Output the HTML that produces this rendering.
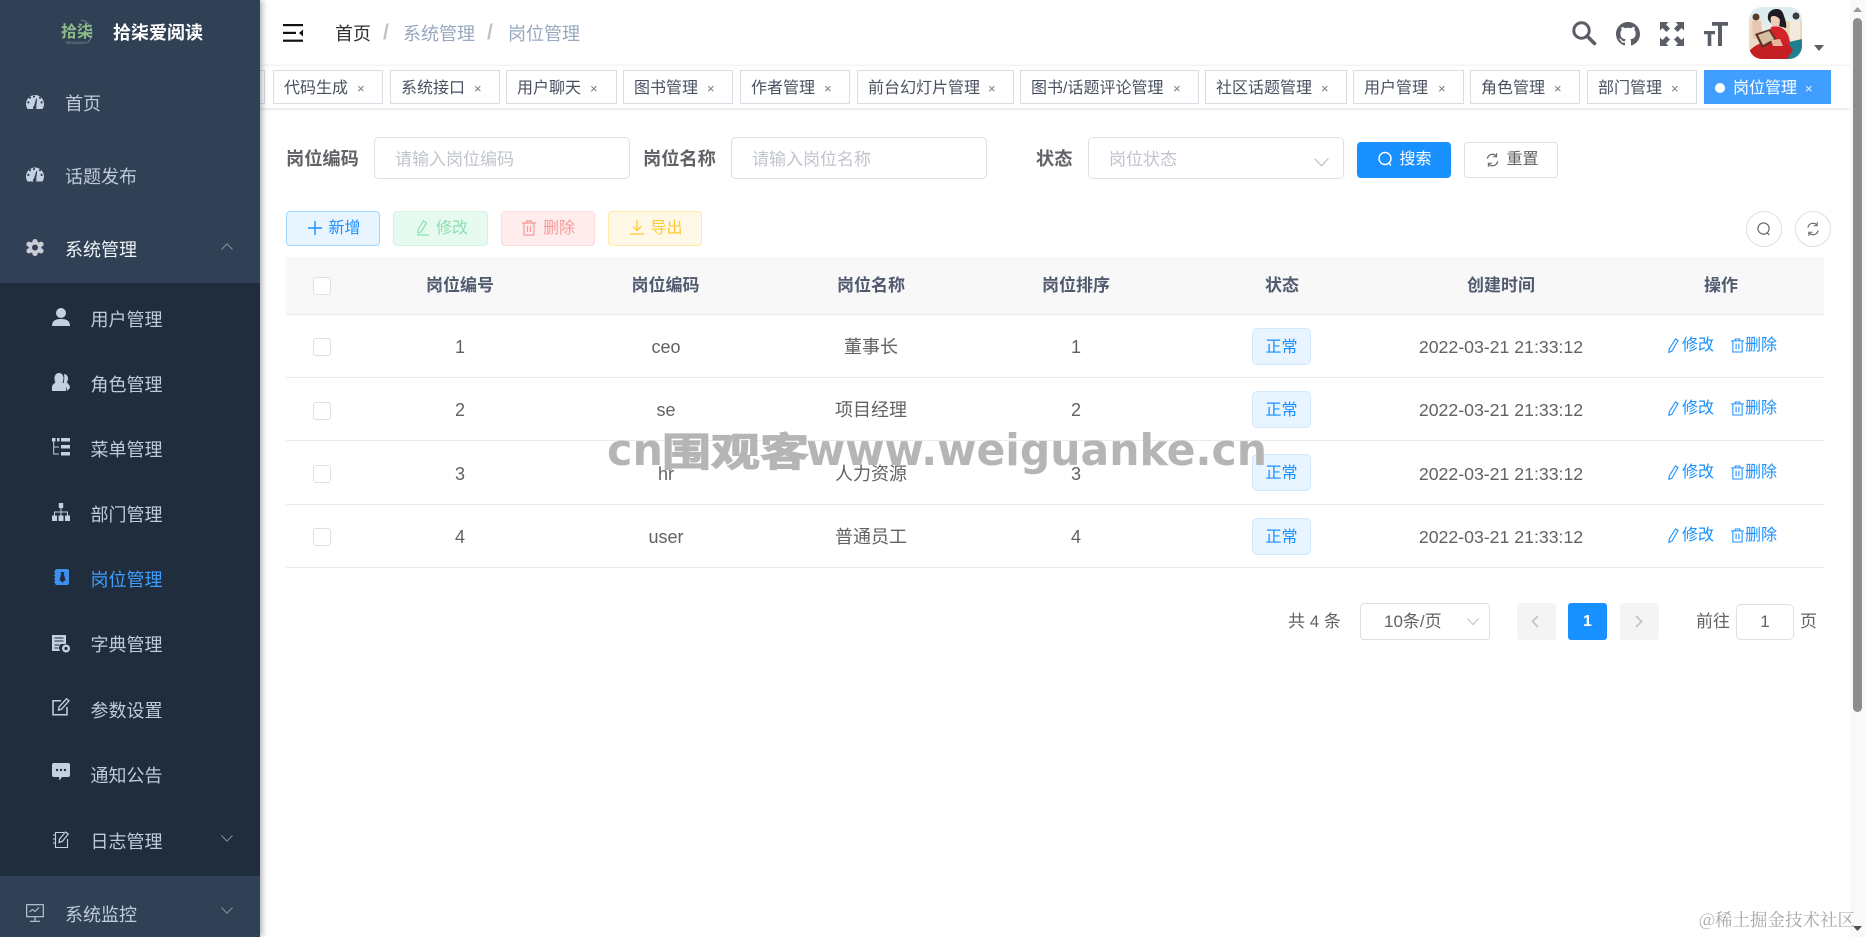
<!DOCTYPE html>
<html lang="zh-CN">
<head>
<meta charset="utf-8">
<title>岗位管理</title>
<style>
*{box-sizing:border-box}
html,body{margin:0;padding:0;width:1865px;height:937px;overflow:hidden;background:#fff}
body{font-family:"Liberation Sans","Noto Sans CJK SC",sans-serif;color:#606266;position:relative}
.a{position:absolute}
.t{position:absolute;white-space:nowrap;line-height:24px;height:24px}
.c{position:absolute;white-space:nowrap;line-height:24px;height:24px;text-align:center;transform:translateX(-50%)}
svg{position:absolute;display:block;overflow:visible}
#side{position:absolute;left:0;top:0;width:260px;height:937px;background:#304156;box-shadow:2px 0 6px rgba(0,21,41,.35);z-index:3}
#sub{position:absolute;left:0;top:283px;width:260px;height:593px;background:#1f2d3d}
.m{font-size:18px;color:#bfcbd9;margin-top:1px}
.tag{position:absolute;top:70px;height:34px;border:1px solid #d8dce5;background:#fff;font-size:16px;line-height:36px;color:#495060;padding-left:10px;white-space:nowrap}
.tag i{position:absolute;top:0;font-style:normal;font-size:13px;color:#77797f}
.inp{position:absolute;top:137px;height:42px;border:1px solid #dcdfe6;border-radius:5px;background:#fff;font-size:17px;line-height:44px;color:#c0c4cc;padding-left:20px}
.lab{font-size:18.2px;font-weight:bold;color:#606266;top:147px}
.btn{position:absolute;top:211px;height:35px;border-radius:4px;border:1px solid}
.bt{position:absolute;top:217px;font-size:16px;line-height:24px;height:24px;white-space:nowrap}
.hd{font-size:17px;font-weight:bold;color:#515a6e;top:274px}
.line{position:absolute;left:286px;width:1538px;height:1px;background:#e6ebf5}
.cb{position:absolute;left:313px;width:18px;height:18px;border:1px solid #dcdfe6;border-radius:3px;background:#fff}
.td{font-size:18px;color:#606266;margin-top:1px}
.dt{font-size:17.7px}
.st{position:absolute;left:1252px;width:59px;height:37px;background:#e8f4ff;border:1px solid #d1e9ff;border-radius:5px;color:#1890ff;font-size:16px;line-height:37px;text-align:center}
.op{font-size:16px;color:#1890ff;margin-top:1px}
.pg{position:absolute;top:603px;width:39px;height:37px;border-radius:3px;background:#f4f4f5}
.circ{position:absolute;top:211px;width:36px;height:36px;border:1px solid #dcdfe6;border-radius:50%;background:#fff}
.bc{font-size:18px;color:#97a8be;top:22px}
.sl{font-size:21px;color:#c0c4cc;font-weight:bold;top:21px}
</style>
</head>
<body>

<!-- main top header -->
<svg style="left:283px;top:24px" width="21" height="18" viewBox="0 0 21 18"><rect x="0" y="0" width="20" height="2.2" fill="#111"/><rect x="0" y="7.8" width="13" height="2.2" fill="#111"/><rect x="0" y="15.6" width="20" height="2.2" fill="#111"/><path d="M20 5.5v7l-4-3.5z" fill="#111"/></svg>
<div class="t bc" style="left:335px;color:#303133">首页</div>
<div class="t sl" style="left:383px">/</div>
<div class="t bc" style="left:403px">系统管理</div>
<div class="t sl" style="left:487px">/</div>
<div class="t bc" style="left:508px">岗位管理</div>

<svg style="left:1572px;top:21px" width="24" height="24" viewBox="0 0 24 24"><circle cx="9.5" cy="9.5" r="7.7" fill="none" stroke="#5a5e66" stroke-width="3"/><path d="M15 15l7.5 7.5" stroke="#5a5e66" stroke-width="3.6" stroke-linecap="round"/></svg>
<svg style="left:1616px;top:22px" width="24" height="24" viewBox="0 0 16 16"><path fill="#5a5e66" d="M8 0C3.58 0 0 3.58 0 8c0 3.54 2.29 6.53 5.47 7.59.4.07.55-.17.55-.38 0-.19-.01-.82-.01-1.49-2.01.37-2.53-.49-2.69-.94-.09-.23-.48-.94-.82-1.13-.28-.15-.68-.52-.01-.53.63-.01 1.08.58 1.23.82.72 1.21 1.87.87 2.33.66.07-.52.28-.87.51-1.07-1.78-.2-3.64-.89-3.64-3.95 0-.87.31-1.59.82-2.15-.08-.2-.36-1.02.08-2.12 0 0 .67-.21 2.2.82.64-.18 1.32-.27 2-.27s1.36.09 2 .27c1.53-1.04 2.2-.82 2.2-.82.44 1.1.16 1.92.08 2.12.51.56.82 1.27.82 2.15 0 3.07-1.87 3.75-3.65 3.95.29.25.54.73.54 1.48 0 1.07-.01 1.93-.01 2.2 0 .21.15.46.55.38A8.013 8.013 0 0016 8c0-4.42-3.58-8-8-8z"/></svg>
<svg style="left:1660px;top:22px" width="24" height="24" viewBox="0 0 24 24" fill="#5a5e66"><path d="M0 0h8.5L6 2.5l4 4-3.500 3.500-4-4L0 8.500zM24 0v8.500L21.500 6l-4 4L14 6.500l4-4L15.500 0zM0 24v-8.500L2.500 18l4-4L10 17.500l-4 4L8.500 24zM24 24h-8.500l2.500-2.500-4-4 3.500-3.500 4 4 2.500-2.500z"/></svg>
<svg style="left:1704px;top:22px" width="24" height="24" viewBox="0 0 24 24" fill="#5a5e66"><path d="M8 0h16v3.800h-6V24h-4V3.800H8zM0 9h11v3.300H7.300V24H3.700V12.300H0z"/></svg>

<svg style="left:1749px;top:7px" width="53" height="52" viewBox="0 0 53 52">
<defs><clipPath id="av"><rect width="53" height="52" rx="13"/></clipPath></defs>
<g clip-path="url(#av)">
<rect width="53" height="52" fill="#e9efe6"/>
<rect x="0" y="0" width="53" height="18" fill="#dcecef"/>
<rect x="35" y="14" width="18" height="26" fill="#e8d9b8"/>
<path d="M0 12h12v30H0z" fill="#efdcc8"/>
<circle cx="7" cy="10" r="3.500" fill="#5a3b2c"/>
<path d="M3 14h9l2 18H4z" fill="#e7c6b0"/>
<circle cx="47" cy="9" r="3.500" fill="#3c3a3a"/>
<path d="M41 14h10v22H41z" fill="#f3e9dc"/>
<path d="M36 36l17-4v20H30z" fill="#1f7f8c"/>
<path d="M28 2c-7 0-10 5-9 10 1 3 4 5 6 6l12 3c1-4-1-9-2-12-1-4-3-7-7-7z" fill="#1d1a22"/>
<path d="M22 10c2-2 7-1 9 3l-1 8-6-1c-2-3-3-7-2-10z" fill="#f0cdb8"/>
<path d="M22 20c7-2 14 1 17 8 2 5 3 10 1 15l-13 2-8-12z" fill="#d2232a"/>
<path d="M0 44c8-8 18-11 30-9 5 1 12 3 14 8l-6 9H0z" fill="#c51f26"/>
<path d="M6 27l15-5 7 11-15 8z" fill="#5b3428"/>
<path d="M9 28l11-4 5 8-11 6z" fill="#d9bda0"/>
<path d="M22 33l9-1 3 7-10 0z" fill="#e9b79e"/>
</g></svg>
<svg style="left:1814px;top:45px" width="10" height="6" viewBox="0 0 10 6"><path d="M0 0h10L5 6z" fill="#5a5e66"/></svg>

<!-- tags bar -->
<div class="a" style="left:260px;top:65px;width:1590px;height:43px;background:#fff;border-top:1px solid #f3f3f3;box-shadow:0 1px 3px rgba(0,0,0,.14)"></div>
<div class="tag" style="left:250px;width:15px"></div>
<div class="tag" style="left:273px;width:110px">代码生成<i style="left:83px">×</i></div>
<div class="tag" style="left:390px;width:110px">系统接口<i style="left:83px">×</i></div>
<div class="tag" style="left:506px;width:111px">用户聊天<i style="left:83px">×</i></div>
<div class="tag" style="left:623px;width:110px">图书管理<i style="left:83px">×</i></div>
<div class="tag" style="left:740px;width:110px">作者管理<i style="left:83px">×</i></div>
<div class="tag" style="left:857px;width:157px">前台幻灯片管理<i style="left:130px">×</i></div>
<div class="tag" style="left:1020px;width:179px">图书/话题评论管理<i style="left:152px">×</i></div>
<div class="tag" style="left:1205px;width:142px">社区话题管理<i style="left:115px">×</i></div>
<div class="tag" style="left:1353px;width:111px">用户管理<i style="left:84px">×</i></div>
<div class="tag" style="left:1470px;width:110px">角色管理<i style="left:83px">×</i></div>
<div class="tag" style="left:1587px;width:110px">部门管理<i style="left:83px">×</i></div>
<div class="tag" style="left:1704px;width:127px;background:#409eff;border-color:#409eff;color:#fff;padding-left:28px">岗位管理<i style="left:100px;color:#e8f2ff">×</i><span class="a" style="left:10px;top:12px;width:10px;height:10px;border-radius:50%;background:#fff"></span></div>

<!-- search form -->
<div class="t lab" style="left:286px">岗位编码</div>
<div class="inp" style="left:374px;width:256px">请输入岗位编码</div>
<div class="t lab" style="left:643px">岗位名称</div>
<div class="inp" style="left:731px;width:256px">请输入岗位名称</div>
<div class="t lab" style="left:1036px">状态</div>
<div class="inp" style="left:1088px;width:256px">岗位状态</div>
<svg style="left:1314px;top:158px" width="15" height="9" viewBox="0 0 15 9"><path d="M.7.7l6.800 7 6.800-7" fill="none" stroke="#c0c4cc" stroke-width="1.300"/></svg>

<div class="a" style="left:1357px;top:142px;width:94px;height:36px;border-radius:4px;background:#1890ff"></div>
<svg style="left:1378px;top:151px" width="15" height="16" viewBox="0 0 15 16"><circle cx="7" cy="7.500" r="6" fill="none" stroke="#fff" stroke-width="1.400"/><path d="M11 12l2 2.500" stroke="#fff" stroke-width="1.400"/></svg>
<div class="t" style="left:1399.5px;top:148px;font-size:16px;color:#fff">搜索</div>
<div class="a" style="left:1464px;top:142px;width:94px;height:36px;border-radius:4px;background:#fff;border:1px solid #dcdfe6"></div>
<svg style="left:1486px;top:153px" width="13" height="14" viewBox="0 0 14 15"><path d="M1.500 6A5.600 5.600 0 0 1 11 3M12.500 9A5.600 5.600 0 0 1 3 12" fill="none" stroke="#606266" stroke-width="1.300"/><path d="M11.500 0v4h-4M2.500 15v-4h4" fill="none" stroke="#606266" stroke-width="1"/></svg>
<div class="t" style="left:1506.5px;top:148px;font-size:16px;color:#606266">重置</div>

<!-- tool buttons -->
<div class="btn" style="left:286px;width:94px;background:#e8f4ff;border-color:#a3d3ff"></div>
<svg style="left:308px;top:221px" width="14" height="14" viewBox="0 0 14 14"><path d="M7 0v14M0 7h14" stroke="#1890ff" stroke-width="1.400"/></svg>
<div class="bt" style="left:328.5px;color:#1890ff">新增</div>
<div class="btn" style="left:393px;width:95px;background:#e7faf0;border-color:#d0f5e0"></div>
<svg style="left:416px;top:220px" width="14" height="16" viewBox="0 0 14 16"><path d="M7.500 1l3 2-5.500 9-3 1 0-3.500zM1 15h12" fill="none" stroke="#89e0ae" stroke-width="1.200"/></svg>
<div class="bt" style="left:436px;color:#89e0ae">修改</div>
<div class="btn" style="left:501px;width:94px;background:#ffeded;border-color:#ffdbdb"></div>
<svg style="left:522px;top:220px" width="14" height="16" viewBox="0 0 14 16"><path d="M0 3h14M4.500 3V1h5v2M2 3v12h10V3M5.500 6v6M8.500 6v6" fill="none" stroke="#f79a9a" stroke-width="1.200"/></svg>
<div class="bt" style="left:543px;color:#f79a9a">删除</div>
<div class="btn" style="left:608px;width:94px;background:#fff8e6;border-color:#ffe8a8"></div>
<svg style="left:630px;top:220px" width="14" height="15" viewBox="0 0 14 15"><path d="M7 0v10M3 6.500l4 4 4-4M0 14h14" fill="none" stroke="#ffc933" stroke-width="1.300"/></svg>
<div class="bt" style="left:650.5px;color:#ffc933">导出</div>

<div class="circ" style="left:1746px"></div>
<svg style="left:1757px;top:221px" width="14" height="16" viewBox="0 0 15 16"><circle cx="7" cy="7.500" r="6" fill="none" stroke="#606266" stroke-width="1.200"/><path d="M11 12l2 2.500" stroke="#606266" stroke-width="1.200"/></svg>
<div class="circ" style="left:1795px"></div>
<svg style="left:1806px;top:222px" width="14" height="14" viewBox="0 0 14 15"><path d="M1.500 6A5.600 5.600 0 0 1 11 3M12.500 9A5.600 5.600 0 0 1 3 12" fill="none" stroke="#606266" stroke-width="1.200"/><path d="M11.500 0v4h-4M2.500 15v-4h4" fill="none" stroke="#606266" stroke-width="1"/></svg>

<!-- table -->
<div class="a" style="left:286px;top:257px;width:1538px;height:57px;background:#f8f8f9"></div>
<div class="line" style="top:314px"></div>
<div class="line" style="top:377px"></div>
<div class="line" style="top:440px"></div>
<div class="line" style="top:504px"></div>
<div class="line" style="top:567px"></div>
<div class="cb" style="top:277px"></div>
<div class="cb" style="top:338px"></div>
<div class="cb" style="top:402px"></div>
<div class="cb" style="top:465px"></div>
<div class="cb" style="top:528px"></div>

<div class="c hd" style="left:460px">岗位编号</div>
<div class="c hd" style="left:665.500px">岗位编码</div>
<div class="c hd" style="left:871px">岗位名称</div>
<div class="c hd" style="left:1076px">岗位排序</div>
<div class="c hd" style="left:1282px">状态</div>
<div class="c hd" style="left:1501px">创建时间</div>
<div class="c hd" style="left:1721px">操作</div>

<div class="c td" style="left:460px;top:334px">1</div>
<div class="c td" style="left:666px;top:334px">ceo</div>
<div class="c td" style="left:871px;top:334px">董事长</div>
<div class="c td" style="left:1076px;top:334px">1</div>
<div class="st" style="top:328px">正常</div>
<div class="c td dt" style="left:1501px;top:334px">2022-03-21 21:33:12</div>

<div class="c td" style="left:460px;top:397px">2</div>
<div class="c td" style="left:666px;top:397px">se</div>
<div class="c td" style="left:871px;top:397px">项目经理</div>
<div class="c td" style="left:1076px;top:397px">2</div>
<div class="st" style="top:391px">正常</div>
<div class="c td dt" style="left:1501px;top:397px">2022-03-21 21:33:12</div>

<div class="c td" style="left:460px;top:461px">3</div>
<div class="c td" style="left:666px;top:461px">hr</div>
<div class="c td" style="left:871px;top:461px">人力资源</div>
<div class="c td" style="left:1076px;top:461px">3</div>
<div class="st" style="top:454px">正常</div>
<div class="c td dt" style="left:1501px;top:461px">2022-03-21 21:33:12</div>

<div class="c td" style="left:460px;top:524px">4</div>
<div class="c td" style="left:666px;top:524px">user</div>
<div class="c td" style="left:871px;top:524px">普通员工</div>
<div class="c td" style="left:1076px;top:524px">4</div>
<div class="st" style="top:518px">正常</div>
<div class="c td dt" style="left:1501px;top:524px">2022-03-21 21:33:12</div>

<!-- operation links -->
<svg style="left:1667px;top:338px" width="14" height="15" viewBox="0 0 14 15"><path d="M8.500 1l2.500 1.500L5 13l-3 1.500.2-3.500z" fill="none" stroke="#1890ff" stroke-width="1.100"/></svg>
<div class="t op" style="left:1682px;top:333px">修改</div>
<svg style="left:1731px;top:338px" width="13" height="15" viewBox="0 0 14 16"><path d="M0 3h14M4.500 3V1h5v2M2 3v12h10V3M5.500 6v6M8.500 6v6" fill="none" stroke="#1890ff" stroke-width="1.100"/></svg>
<div class="t op" style="left:1745px;top:333px">删除</div>

<svg style="left:1667px;top:401px" width="14" height="15" viewBox="0 0 14 15"><path d="M8.500 1l2.500 1.500L5 13l-3 1.500.2-3.500z" fill="none" stroke="#1890ff" stroke-width="1.100"/></svg>
<div class="t op" style="left:1682px;top:396px">修改</div>
<svg style="left:1731px;top:401px" width="13" height="15" viewBox="0 0 14 16"><path d="M0 3h14M4.500 3V1h5v2M2 3v12h10V3M5.500 6v6M8.500 6v6" fill="none" stroke="#1890ff" stroke-width="1.100"/></svg>
<div class="t op" style="left:1745px;top:396px">删除</div>

<svg style="left:1667px;top:465px" width="14" height="15" viewBox="0 0 14 15"><path d="M8.500 1l2.500 1.500L5 13l-3 1.500.2-3.500z" fill="none" stroke="#1890ff" stroke-width="1.100"/></svg>
<div class="t op" style="left:1682px;top:460px">修改</div>
<svg style="left:1731px;top:465px" width="13" height="15" viewBox="0 0 14 16"><path d="M0 3h14M4.500 3V1h5v2M2 3v12h10V3M5.500 6v6M8.500 6v6" fill="none" stroke="#1890ff" stroke-width="1.100"/></svg>
<div class="t op" style="left:1745px;top:460px">删除</div>

<svg style="left:1667px;top:528px" width="14" height="15" viewBox="0 0 14 15"><path d="M8.500 1l2.500 1.500L5 13l-3 1.500.2-3.500z" fill="none" stroke="#1890ff" stroke-width="1.100"/></svg>
<div class="t op" style="left:1682px;top:523px">修改</div>
<svg style="left:1731px;top:528px" width="13" height="15" viewBox="0 0 14 16"><path d="M0 3h14M4.500 3V1h5v2M2 3v12h10V3M5.500 6v6M8.500 6v6" fill="none" stroke="#1890ff" stroke-width="1.100"/></svg>
<div class="t op" style="left:1745px;top:523px">删除</div>

<!-- pagination -->
<div class="t" style="left:1288px;top:610px;font-size:17px;color:#606266">共 4 条</div>
<div class="a" style="left:1360px;top:603px;width:130px;height:37px;border:1px solid #dcdfe6;border-radius:4px"></div>
<div class="t" style="left:1384px;top:610px;font-size:17px;color:#606266">10条/页</div>
<svg style="left:1467px;top:618px" width="12" height="7" viewBox="0 0 12 7"><path d="M.5.500L6 6.500 11.500.500" fill="none" stroke="#c0c4cc" stroke-width="1.100"/></svg>
<div class="pg" style="left:1517px"></div>
<svg style="left:1531px;top:615px" width="8" height="13" viewBox="0 0 8 13"><path d="M7 1L1.500 6.500 7 12" fill="none" stroke="#c0c4cc" stroke-width="1.700"/></svg>
<div class="pg" style="left:1568px;background:#1890ff;color:#fff;text-align:center;font-size:16px;font-weight:bold;line-height:37px">1</div>
<div class="pg" style="left:1620px"></div>
<svg style="left:1635px;top:615px" width="8" height="13" viewBox="0 0 8 13"><path d="M1 1l5.500 5.500L1 12" fill="none" stroke="#c0c4cc" stroke-width="1.700"/></svg>
<div class="t" style="left:1696px;top:610px;font-size:17px;color:#606266">前往</div>
<div class="a" style="left:1736px;top:604px;width:58px;height:36px;border:1px solid #dcdfe6;border-radius:5px;text-align:center;line-height:34px;font-size:17px;color:#606266">1</div>
<div class="t" style="left:1800px;top:610px;font-size:17px;color:#606266">页</div>

<!-- scrollbar -->
<div class="a" style="left:1850px;top:0;width:15px;height:937px;background:#f9f9f9"></div>
<div class="a" style="left:1853px;top:18px;width:9px;height:694px;background:#8d8d8d;border-radius:5px"></div>
<svg style="left:1853px;top:7px" width="9" height="5" viewBox="0 0 9 5"><path d="M0 5h9L4.500 0z" fill="#9a9a9a"/></svg>
<svg style="left:1853px;top:926px" width="9" height="5" viewBox="0 0 9 5"><path d="M0 0h9L4.500 5z" fill="#505050"/></svg>

<!-- sidebar -->
<div id="side">
  <div id="sub"></div>
  <svg style="left:61px;top:19px" width="33" height="27" viewBox="0 0 33 27">
    <path d="M20 1a13 13 0 0 1 6 23" fill="none" stroke="#8b9aa8" stroke-width=".7"/>
    <text x="0" y="18" font-size="16" font-family="'Noto Sans CJK SC',sans-serif" font-weight="bold" fill="#8fbc8a" textLength="32" lengthAdjust="spacingAndGlyphs">拾柒</text>
    <text x="5" y="25" font-size="4" font-family="'Liberation Sans',sans-serif" fill="#8b9aa8" textLength="20" lengthAdjust="spacingAndGlyphs">READING</text>
  </svg>
  <div class="t" style="left:113px;top:21px;font-size:18px;font-weight:bold;color:#fff">拾柒爱阅读</div>

  <svg style="left:26px;top:95px" width="18" height="14" viewBox="0 0 18 14"><path fill="#c5d0e0" d="M9 0C4 0 0 4 0 9c0 2 .6 3.600 1.600 5h14.800c1-1.400 1.600-3 1.600-5 0-5-4-9-9-9z"/><path fill="#304156" d="M10.200 3.500L8 11a1.800 1.800 0 1 0 2.200.6l1-7.800zM4 3.800a1.100 1.100 0 1 1 .01 0zM2.400 8.500a1.100 1.100 0 1 1 .01 0zM15.600 8.500a1.100 1.100 0 1 1 .01 0zM8 2.700a1.100 1.100 0 1 1 .01 0zM14 3.800a1.100 1.100 0 1 1 .01 0z"/></svg>
  <div class="t m" style="left:65px;top:91px">首页</div>

  <svg style="left:26px;top:167px" width="18" height="15" viewBox="0 0 18 14"><path fill="#c5d0e0" d="M9 0C4 0 0 4 0 9c0 2 .6 3.600 1.600 5h14.800c1-1.400 1.600-3 1.600-5 0-5-4-9-9-9z"/><path fill="#304156" d="M10.200 3.500L8 11a1.800 1.800 0 1 0 2.200.6l1-7.800zM4 3.800a1.100 1.100 0 1 1 .01 0zM2.400 8.500a1.100 1.100 0 1 1 .01 0zM15.600 8.500a1.100 1.100 0 1 1 .01 0zM8 2.700a1.100 1.100 0 1 1 .01 0zM14 3.800a1.100 1.100 0 1 1 .01 0z"/></svg>
  <div class="t m" style="left:65px;top:164px">话题发布</div>

  <svg style="left:26px;top:239px" width="18" height="17" viewBox="0 0 18 17"><g fill="#c9ced6"><circle cx="9" cy="8.500" r="6.300"/><circle cx="9" cy="2.600" r="2.600"/><circle cx="9" cy="14.400" r="2.600"/><circle cx="3" cy="5.200" r="2.600"/><circle cx="15" cy="5.200" r="2.600"/><circle cx="3" cy="11.800" r="2.600"/><circle cx="15" cy="11.800" r="2.600"/></g><circle cx="9" cy="8.500" r="3" fill="#304156"/></svg>
  <div class="t m" style="left:65px;top:237px;color:#eef1f5">系统管理</div>
  <svg style="left:221px;top:243px" width="12" height="7" viewBox="0 0 12 7"><path d="M.5 6.500L6 .8l5.500 5.700" fill="none" stroke="#8493a6" stroke-width="1"/></svg>

  <svg style="left:52px;top:308px" width="18" height="18" viewBox="0 0 18 18"><g fill="#c5d0e0"><ellipse cx="9" cy="5" rx="5" ry="5"/><path d="M0 18c0-5 3-7 9-7s9 2 9 7z"/></g></svg>
  <div class="t m" style="left:90.500px;top:307px">用户管理</div>

  <svg style="left:52px;top:373px" width="18" height="18" viewBox="0 0 18 18"><g fill="#c5d0e0"><path d="M0 18V14c0-2 2-3.500 3.500-4.500C2.500 8 2.500 6 2.500 5c0-3 2-5 4.500-5s4.500 2 4.500 5c0 1-.2 3-1 4.500 2 1 3.500 2.500 3.500 4.500v4z"/><path d="M12 1c2.500 0 4 2 4 4.500 0 1.500-.6 3-1.300 4 1.500 1 3.300 3 3.300 5.500l-3 3c0-3-1.500-6-3.500-8 .8-2 1-6.500.5-9z"/></g></svg>
  <div class="t m" style="left:90.500px;top:372px">角色管理</div>

  <svg style="left:52px;top:438px" width="18" height="18" viewBox="0 0 18 18"><g fill="#c5d0e0"><rect x="0" y="0" width="3.500" height="3.500"/><rect x="9" y="0" width="9" height="3.500"/><rect x="9" y="7" width="9" height="3.500"/><rect x="9" y="14" width="9" height="3.500"/><rect x="5" y="0" width="2.500" height="3.500"/></g><path d="M1.700 3v13H7M1.700 9H7" fill="none" stroke="#c5d0e0" stroke-width="1"/></svg>
  <div class="t m" style="left:90.500px;top:437px">菜单管理</div>

  <svg style="left:52px;top:503px" width="18" height="18" viewBox="0 0 18 18"><g fill="#c5d0e0"><rect x="6.800" y="0" width="4.400" height="5"/><rect x="0" y="12.500" width="5" height="5.500"/><rect x="6.500" y="12.500" width="5" height="5.500"/><rect x="13" y="12.500" width="5" height="5.500"/></g><path d="M9 5v7.500M2.500 12.500V9h13v3.500" fill="none" stroke="#c5d0e0" stroke-width="1"/></svg>
  <div class="t m" style="left:90.500px;top:502px">部门管理</div>

  <svg style="left:54px;top:569px" width="15" height="16" viewBox="0 0 15 16"><rect x="1" y="0" width="14" height="16" rx="2" fill="#3d8ff0"/><path d="M0 3h2M0 6.500h2M0 10h2M0 13h2" stroke="#3d8ff0" stroke-width="1"/><path d="M6.500 3h4l-.7 2 1.700 6-3 2.500L5.500 11l1.700-6z" fill="#1f2d3d"/></svg>
  <div class="t m" style="left:90.500px;top:567px;color:#409eff">岗位管理</div>

  <svg style="left:52px;top:635px" width="18" height="18" viewBox="0 0 18 18"><g fill="#c5d0e0"><path d="M0 0h14v9H9a5 5 0 0 0-1 7H0z"/><circle cx="14" cy="13.500" r="4"/></g><path d="M2.500 3h9M2.500 6h9M2.500 10h5M2.500 13h4" stroke="#1f2d3d" stroke-width="1"/><circle cx="14" cy="13.500" r="1.600" fill="#1f2d3d"/></svg>
  <div class="t m" style="left:90.500px;top:632px">字典管理</div>

  <svg style="left:52px;top:698px" width="18" height="18" viewBox="0 0 18 18"><path d="M9 2.800H1v14h14V9" fill="none" stroke="#c5d0e0" stroke-width="1.500"/><path d="M14.500.8l2.500 2-7.500 8.500-3 .8.500-3z" fill="none" stroke="#c5d0e0" stroke-width="1.300"/></svg>
  <div class="t m" style="left:90.500px;top:698px">参数设置</div>

  <svg style="left:52px;top:763px" width="18" height="18" viewBox="0 0 18 18"><path d="M2 0h14a2 2 0 0 1 2 2v10a2 2 0 0 1-2 2h-6l-2.500 3.500L7 14H2a2 2 0 0 1-2-2V2a2 2 0 0 1 2-2z" fill="#c5d0e0"/><circle cx="5" cy="7" r="1.200" fill="#1f2d3d"/><circle cx="9" cy="7" r="1.200" fill="#1f2d3d"/><circle cx="13" cy="7" r="1.200" fill="#1f2d3d"/></svg>
  <div class="t m" style="left:90.500px;top:763px">通知公告</div>

  <svg style="left:53px;top:831px" width="16" height="18" viewBox="0 0 16 18"><path d="M11 1.500H2.500v15h12V8" fill="none" stroke="#c5d0e0" stroke-width="1.100"/><path d="M0 4h3M0 8h3M0 12h3" stroke="#c5d0e0" stroke-width="1"/><path d="M12.500 1l2.800 2-6 7.500-3.200 1 .5-3.500z" fill="none" stroke="#c5d0e0" stroke-width="1.200"/></svg>
  <div class="t m" style="left:90.500px;top:829px">日志管理</div>
  <svg style="left:221px;top:835px" width="12" height="7" viewBox="0 0 12 7"><path d="M.5.500L6 6.200 11.500.500" fill="none" stroke="#8493a6" stroke-width="1"/></svg>

  <svg style="left:26px;top:904px" width="18" height="18" viewBox="0 0 18 18"><rect x=".7" y=".7" width="16.600" height="12" fill="none" stroke="#c5d0e0" stroke-width="1.100"/><path d="M3.500 8l3-2.500 2.500 2 4-4" fill="none" stroke="#c5d0e0" stroke-width="1"/><path d="M9 13v3.500M4 17.300h10" stroke="#c5d0e0" stroke-width="1.200"/></svg>
  <div class="t m" style="left:65px;top:902px">系统监控</div>
  <svg style="left:221px;top:907px" width="12" height="7" viewBox="0 0 12 7"><path d="M.5.500L6 6.200 11.500.500" fill="none" stroke="#8493a6" stroke-width="1"/></svg>
</div>

<!-- watermarks -->
<svg style="left:0;top:0;z-index:5" width="1865" height="937" viewBox="0 0 1865 937">
  <g fill="#b5b5b5" font-weight="bold">
    <text x="607" y="465" font-family="'DejaVu Sans',sans-serif" font-size="44" textLength="56" lengthAdjust="spacingAndGlyphs">cn</text>
    <text x="662" y="466" font-family="'Noto Sans CJK SC',sans-serif" font-size="39" textLength="147" lengthAdjust="spacingAndGlyphs" stroke="#b5b5b5" stroke-width="1.200">围观客</text>
    <text x="806" y="465" font-family="'DejaVu Sans',sans-serif" font-size="44" textLength="461" lengthAdjust="spacingAndGlyphs">www.weiguanke.cn</text>
  </g>
  <text x="1699" y="926" font-family="'Noto Serif CJK SC',serif" font-size="17.500" fill="#a5a5a5">@稀土掘金技术社区</text>
</svg>

</body>
</html>
